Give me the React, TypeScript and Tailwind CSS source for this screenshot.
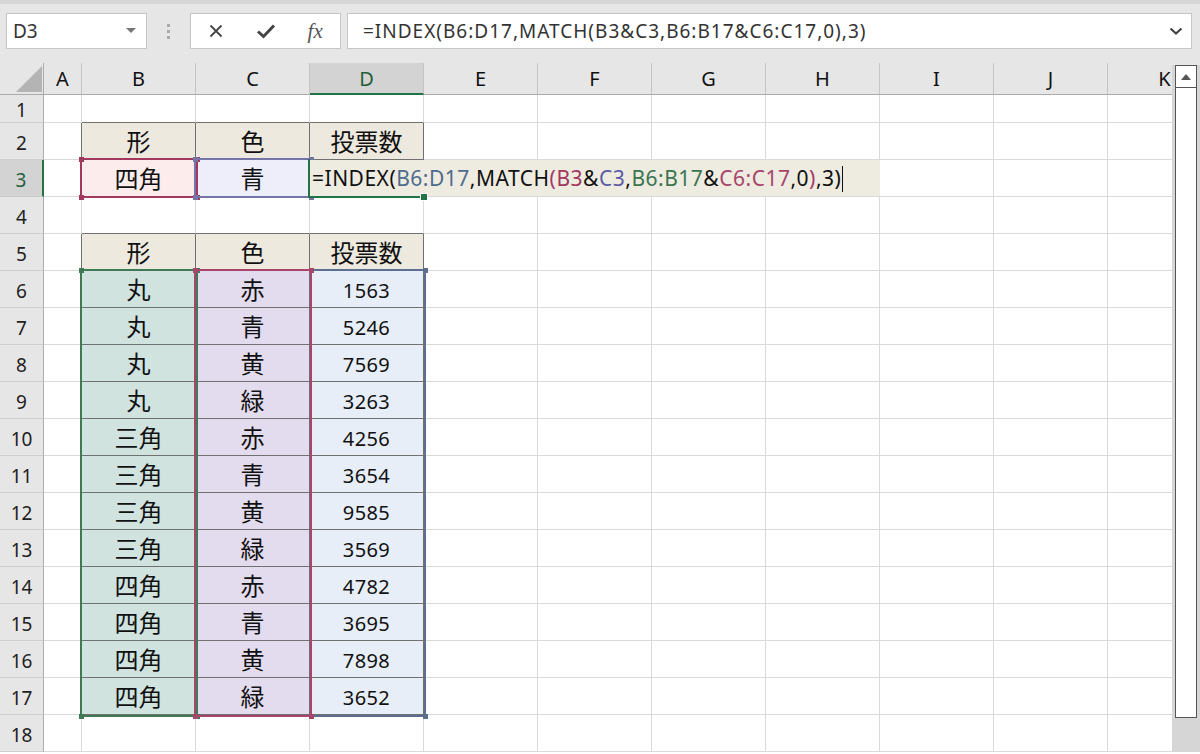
import React from 'react';

const COLS: { k: string; w: number }[] = [
  { k: 'A', w: 38 },
  { k: 'B', w: 114 },
  { k: 'C', w: 114 },
  { k: 'D', w: 114 },
  { k: 'E', w: 114 },
  { k: 'F', w: 114 },
  { k: 'G', w: 114 },
  { k: 'H', w: 114 },
  { k: 'I', w: 114 },
  { k: 'J', w: 114 },
  { k: 'K', w: 114 },
];

const DATA: [string, string, string][] = [
  ['丸', '赤', '1563'],
  ['丸', '青', '5246'],
  ['丸', '黄', '7569'],
  ['丸', '緑', '3263'],
  ['三角', '赤', '4256'],
  ['三角', '青', '3654'],
  ['三角', '黄', '9585'],
  ['三角', '緑', '3569'],
  ['四角', '赤', '4782'],
  ['四角', '青', '3695'],
  ['四角', '黄', '7898'],
  ['四角', '緑', '3652'],
];

type CellInfo = { text: string; bg: string; num?: boolean };

function cellInfo(r: number, c: string): CellInfo {
  if ((r === 2 || r === 5) && (c === 'B' || c === 'C' || c === 'D')) {
    const t = c === 'B' ? '形' : c === 'C' ? '色' : '投票数';
    return { text: t, bg: 'bg-[#ede9de]' };
  }
  if (r === 3 && c === 'B') return { text: '四角', bg: 'bg-[#fcecec]' };
  if (r === 3 && c === 'C') return { text: '青', bg: 'bg-[#eeeefa]' };
  if (r >= 6 && r <= 17) {
    const d = DATA[r - 6];
    if (c === 'B') return { text: d[0], bg: 'bg-[#d0e3df]' };
    if (c === 'C') return { text: d[1], bg: 'bg-[#e3dcee]' };
    if (c === 'D') return { text: d[2], bg: 'bg-[#e7eef8]', num: true };
  }
  return { text: '', bg: 'bg-white' };
}

function isTableRow(r: number) {
  return r === 2 || r === 3 || (r >= 5 && r <= 17);
}

function isTableCol(c: string) {
  return c === 'B' || c === 'C' || c === 'D';
}

function Row({ r }: { r: number }) {
  const h = r === 1 ? 'h-[28px]' : 'h-[37px]';
  const selected = r === 3;
  return (
    <div className={`flex ${h}`}>
      <div
        className={
          selected
            ? 'w-[44px] shrink-0 h-full flex items-center justify-center pt-[4px] bg-[#d3d3d3] border-b border-b-[#c9c9c9] border-r-2 border-r-[#217346] text-[#1f5f3a] text-[19px]'
            : 'w-[44px] shrink-0 h-full flex items-center justify-center pt-[4px] bg-[#e6e6e6] border-b border-b-[#cfcfcf] border-r border-r-[#ababab] text-[#222] text-[19px]'
        }
      >
        {r}
      </div>
      {COLS.map((col) => {
        const info = cellInfo(r, col.k);
        const inTable = isTableRow(r) && isTableCol(col.k);
        const darkR = inTable || (isTableRow(r) && col.k === 'A');
        const darkB = inTable || ((r === 1 || r === 4) && isTableCol(col.k));
        const cls = [
          'shrink-0 h-full flex items-center justify-center border-r border-b',
          darkR ? 'border-r-[#707070]' : 'border-r-[#dadada]',
          darkB ? 'border-b-[#707070]' : 'border-b-[#dadada]',
          info.bg,
          info.num ? 'text-[20px] pt-[3px] tracking-[0.4px]' : 'text-[24px] pt-[2px]',
          'text-[#111]',
        ].join(' ');
        return (
          <div key={col.k} className={cls} style={{ width: col.w }}>
            {info.text}
          </div>
        );
      })}
    </div>
  );
}

function Handle({ pos, color }: { pos: string; color: string }) {
  return <div className={`absolute w-[5px] h-[5px] ${pos} ${color}`} />;
}

function RangeBox({
  left,
  top,
  width,
  height,
  border,
  fill,
}: {
  left: number;
  top: number;
  width: number;
  height: number;
  border: string;
  fill: string;
}) {
  return (
    <div className={`absolute border-2 ${border}`} style={{ left, top, width, height }}>
      <Handle pos="-left-[3.5px] -top-[3.5px]" color={fill} />
      <Handle pos="-right-[3.5px] -top-[3.5px]" color={fill} />
      <Handle pos="-left-[3.5px] -bottom-[3.5px]" color={fill} />
      <Handle pos="-right-[3.5px] -bottom-[3.5px]" color={fill} />
    </div>
  );
}

function Grid() {
  const rows = Array.from({ length: 18 }, (_, i) => i + 1);
  return (
    <div className="relative w-[1172px] shrink-0 overflow-hidden">
      {/* column headers */}
      <div className="flex h-[32px]">
        <div className="w-[44px] shrink-0 h-full bg-[#e6e6e6] border-r border-b border-r-[#ababab] border-b-[#ababab] relative">
          <svg className="absolute left-0 top-0" width="44" height="32" viewBox="0 0 44 32">
            <polygon points="16,29 42,29 42,3" fill="#b4b4b4" />
          </svg>
        </div>
        {COLS.map((col) => (
          <div
            key={col.k}
            className={
              col.k === 'D'
                ? 'shrink-0 h-full flex items-center justify-center pt-[1px] bg-[#d3d3d3] border-r border-r-[#c4c4c4] border-b-2 border-b-[#217346] text-[#1f5f3a] text-[20px]'
                : 'shrink-0 h-full flex items-center justify-center pt-[1px] bg-[#e6e6e6] border-r border-r-[#c4c4c4] border-b border-b-[#ababab] text-[#111] text-[20px]'
            }
            style={{ width: col.w }}
          >
            {col.k}
          </div>
        ))}
      </div>
      {rows.map((r) => (
        <Row key={r} r={r} />
      ))}

      {/* range reference highlights */}
      <RangeBox left={80} top={206} width={346} height={448} border="border-[#5d6f90]" fill="bg-[#5d6f90]" />
      <RangeBox left={80} top={206} width={118} height={448} border="border-[#3d7a55]" fill="bg-[#3d7a55]" />
      <RangeBox left={194} top={206} width={118} height={448} border="border-[#a8456a]" fill="bg-[#a8456a]" />
      <RangeBox left={80} top={95} width={118} height={40} border="border-[#a3385e]" fill="bg-[#a3385e]" />
      <RangeBox left={194} top={95} width={118} height={40} border="border-[#7474a6]" fill="bg-[#7474a6]" />

      {/* in-cell editor */}
      <div className="absolute left-[310px] top-[97px] w-[570px] h-[36px] bg-[#eeebe0] flex items-center pl-[2px] pt-[2px] text-[21px] tracking-[0.5px] text-[#111] whitespace-nowrap">
        <span>=INDEX(</span>
        <span className="text-[#4f6b8e]">B6:D17</span>
        <span>,MATCH</span>
        <span className="text-[#a8386a]">(</span>
        <span className="text-[#a3385e]">B3</span>
        <span>&amp;</span>
        <span className="text-[#5c5ca6]">C3</span>
        <span>,</span>
        <span className="text-[#3a7550]">B6:B17</span>
        <span>&amp;</span>
        <span className="text-[#a8456a]">C6:C17</span>
        <span>,0</span>
        <span className="text-[#a8386a]">)</span>
        <span>,3)</span>
        <span className="ml-[1px] w-[1px] h-[26px] bg-[#111]" />
      </div>

      {/* active cell selection */}
      <div className="absolute left-[308px] top-[96px] w-[117px] h-[39px] border-l-2 border-b-2 border-[#217346]" />
      <div className="absolute left-[421px] top-[131px] w-[6px] h-[6px] bg-[#217346] outline outline-1 outline-white" />
    </div>
  );
}

function Scrollbar() {
  return (
    <div className="w-[28px] shrink-0 bg-[#d6d6d6] flex flex-col">
      <div className="h-[2px] bg-[#e6e6e6]" />
      <div className="mx-[3px] h-[653px] border border-[#555] bg-white flex flex-col">
        <div className="h-[22px] border-b border-[#555] flex items-center justify-center">
          <svg width="10" height="6" viewBox="0 0 10 6">
            <polygon points="0,6 10,6 5,0" fill="#555" />
          </svg>
        </div>
      </div>
    </div>
  );
}

function Toolbar() {
  return (
    <div className="h-[63px] bg-[#e6e6e6] border-t-4 border-t-[#d5d5d5] flex items-start pt-[9px] pl-[6px]">
      <div className="w-[141px] h-[36px] bg-white border border-[#c6c6c6] flex items-center pl-[6px] pr-[10px] justify-between">
        <span className="text-[19px] text-[#333]">D3</span>
        <svg width="10" height="6" viewBox="0 0 10 6">
          <polygon points="0,0 10,0 5,5" fill="#777" />
        </svg>
      </div>
      <div className="w-[43px] h-[36px] flex flex-col items-center justify-center gap-[3px]">
        <div className="w-[3px] h-[3px] bg-[#aaa]" />
        <div className="w-[3px] h-[3px] bg-[#aaa]" />
        <div className="w-[3px] h-[3px] bg-[#aaa]" />
      </div>
      <div className="w-[151px] h-[36px] bg-white border border-[#c6c6c6] flex items-center">
        <div className="w-[50px] flex items-center justify-center">
          <svg width="16" height="16" viewBox="0 0 16 16">
            <path d="M2.5 2.5 L13.5 13.5 M13.5 2.5 L2.5 13.5" stroke="#444" strokeWidth="1.8" fill="none" />
          </svg>
        </div>
        <div className="w-[50px] flex items-center justify-center">
          <svg width="20" height="16" viewBox="0 0 20 16">
            <path d="M2 8.5 L7.5 13.5 L18 2.5" stroke="#444" strokeWidth="3" fill="none" />
          </svg>
        </div>
        <div className="w-[50px] flex items-center justify-center">
          <span className="font-['Liberation_Serif',serif] italic text-[21px] text-[#555] leading-none">fx</span>
        </div>
      </div>
      <div className="ml-[6px] w-[845px] h-[36px] bg-white border border-[#c6c6c6] flex items-center pl-[15px] pr-[8px] justify-between">
        <span className="text-[19px] tracking-[1px] text-[#333] whitespace-nowrap">=INDEX(B6:D17,MATCH(B3&amp;C3,B6:B17&amp;C6:C17,0),3)</span>
        <svg width="14" height="8" viewBox="0 0 14 8">
          <path d="M1.5 1.5 L7 6.5 L12.5 1.5" stroke="#444" strokeWidth="2.2" fill="none" />
        </svg>
      </div>
    </div>
  );
}

export default function App() {
  return (
    <div className="w-[1200px] h-[754px] overflow-hidden bg-white font-['Noto_Sans','Noto_Sans_CJK_JP',sans-serif]">
      <Toolbar />
      <div className="flex">
        <Grid />
        <Scrollbar />
      </div>
    </div>
  );
}
